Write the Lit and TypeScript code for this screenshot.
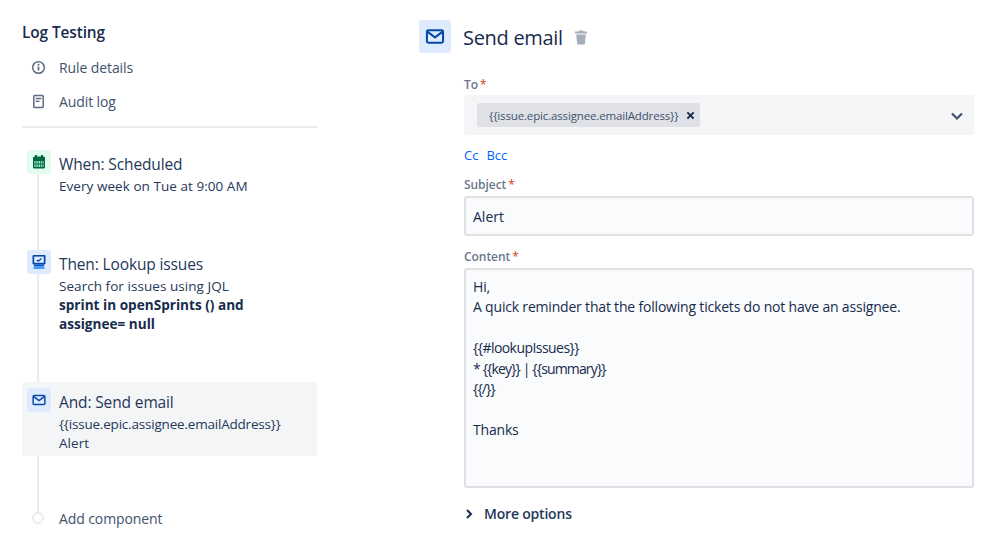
import { LitElement, html, css } from "lit";
import { customElement } from "lit/decorators.js";

const mail = html`<svg viewBox="0 0 24 24" width="100%" height="100%"><rect x="3.2" y="5.2" width="17.6" height="13.6" rx="1.6" fill="none" stroke="#0747a6" stroke-width="2.2"/><path d="M4 7l8 6 8-6" fill="none" stroke="#0747a6" stroke-width="2.2"/></svg>`;

@customElement("app-root")
export class AppRoot extends LitElement {
  static styles = css`
    :host { display: block; width: 998px; height: 542px; overflow: hidden; background: #fff; color: #253858;
      font-family: "Open Sans", "Noto Sans", sans-serif; font-size: 13.5px; letter-spacing: 0; }
    * { box-sizing: border-box; }
    .page { display: flex; height: 542px; padding-left: 22px; }
    .left { width: 295px; flex: none; padding-top: 22px; }
    .title { font-size: 15.4px; font-weight: 600; line-height: 22px; color: #172b4d; letter-spacing: -0.1px; }
    .nav { display: flex; align-items: center; height: 34px; padding-left: 9px; gap: 13px; color: #42526e; font-size: 14px; letter-spacing: -0.1px; }
    .nav svg { width: 15px; height: 15px; flex: none; }
    .navs { margin-top: 6px; }
    .divider { height: 2px; background: #ebecf0; margin-top: 8px; }
    .timeline { position: relative; margin-top: 22px; }
    .line { position: absolute; left: 15px; top: 20px; width: 2px; height: 350px; background: #ebecf0; }
    .step { position: relative; display: flex; gap: 8px; padding-left: 5px; border-radius: 3px; }
    .ico { width: 24px; height: 24px; flex: none; border-radius: 3px; padding: 4px; display: flex; }
    .green { background: #e3fcef; }
    .blue { background: #deebff; }
    .step h3 { margin: 0; font-size: 15.5px; font-weight: 400; line-height: 20px; padding-top: 4px; color: #253858; letter-spacing: -0.13px; }
    .desc { line-height: 19px; color: #253858; margin-top: 3px; letter-spacing: 0.05px; }
    .desc b { font-weight: 700; color: #172b4d; display: block; font-size: 13.6px; letter-spacing: 0; margin-top: -1px; }
    .addr { letter-spacing: -0.2px; }
    .s1 { height: 100px; }
    .s2 { height: 132px; }
    .sel { background: #f4f5f7; height: 74px; padding-top: 6px; }
    .add { position: relative; display: flex; align-items: center; margin-top: 52px; padding-left: 37px; height: 20px; color: #42526e; font-size: 14px; letter-spacing: -0.1px; }
    .dot { position: absolute; left: 10px; top: 4px; width: 12px; height: 12px; border-radius: 50%; background: #fff; border: 2px solid #ebecf0; }

    .right { margin-left: 102px; width: 555px; padding-top: 20px; }
    .head { display: flex; align-items: center; height: 33px; }
    .bigico { width: 32px; height: 33px; background: #deebff; border-radius: 3px; padding: 5px; flex: none; }
    .head h1 { margin: 2px 0 0 12px; font-size: 20px; font-weight: 500; color: #172b4d; letter-spacing: -0.3px; line-height: 33px; }
    .head svg.trash { width: 18px; height: 18px; margin-left: 9px; margin-top: 0; }
    .form { margin-left: 45px; }
    .label { font-size: 12px; font-weight: 600; color: #6b778c; line-height: 16px; letter-spacing: -0.05px; }
    .label i { font-style: normal; font-weight: 400; color: #de350b; margin-left: 2px; }
    .to { margin-top: 24px; }
    .fl { margin-top: 13px; }
    .select { display: flex; align-items: center; justify-content: space-between; height: 40px; background: #f4f5f7; border-radius: 3px; padding: 0 9px 0 13px; margin-top: 2px; }
    .tag { display: flex; align-items: center; height: 24px; width: 223px; padding-left: 12px; background: #dfe1e6; border-radius: 3px; font-size: 11.5px; color: #42526e; letter-spacing: -0.15px; }
    .tag svg { width: 9px; height: 9px; margin-left: 8px; }
    .chev { width: 16px; height: 16px; flex: none; margin-top: 1px; }
    .links { display: flex; gap: 8px; margin-top: 11px; line-height: 18px; font-size: 13px; color: #0065ff; }
    .input { height: 40px; margin-top: 3px; border: 2px solid #dfe1e6; border-radius: 3px; background: #fafbfc; display: flex; align-items: center; padding-left: 7px; color: #172b4d; font-size: 14px; }
    .ta { height: 220px; border: 2px solid #dfe1e6; border-radius: 3px; background: #fafbfc; padding: 7px 7px; margin-top: 3px; line-height: 20.45px; color: #172b4d; font-size: 14px; letter-spacing: -0.19px; white-space: pre-wrap; }
    .b1 { letter-spacing: -0.55px; }
    .b2 { letter-spacing: -0.85px; }
    .more { display: flex; align-items: center; gap: 10px; margin-top: 16px; line-height: 20px; font-size: 14px; font-weight: 600; color: #253858; letter-spacing: -0.2px; }
    .more svg { width: 10px; height: 10px; }
  `;

  render() {
    return html`<div class="page">
      <div class="left">
        <div class="title">Log Testing</div>
        <div class="navs">
          <div class="nav"><svg viewBox="0 0 16 16"><circle cx="8" cy="8" r="6.2" fill="none" stroke="#5e6c84" stroke-width="1.6"/><rect x="7.1" y="7" width="1.8" height="4.2" fill="#5e6c84"/><circle cx="8" cy="5" r="1.1" fill="#5e6c84"/></svg>Rule details</div>
          <div class="nav"><svg viewBox="0 0 16 16"><rect x="3" y="1.5" width="10" height="13" rx="1" fill="none" stroke="#5e6c84" stroke-width="1.6"/><rect x="5" y="4" width="6" height="1.6" fill="#5e6c84"/><rect x="5" y="7" width="4" height="1.6" fill="#5e6c84"/></svg>Audit log</div>
        </div>
        <div class="divider"></div>
        <div class="timeline">
          <div class="line"></div>
          <div class="step s1">
            <div class="ico green"><svg viewBox="0 0 16 16" width="16" height="16"><rect x="4" y="1" width="2" height="3" fill="#006644"/><rect x="10" y="1" width="2" height="3" fill="#006644"/><rect x="2" y="2.5" width="12" height="12" rx="1.5" fill="#006644"/><rect x="3.5" y="7" width="9" height="6" fill="#abf5d1"/><path d="M5 7v6M7.2 7v6M9.4 7v6M11.3 7v6M3.5 10h9" stroke="#006644" stroke-width="0.9"/></svg></div>
            <div>
              <h3>When: Scheduled</h3>
              <div class="desc">Every week on Tue at 9:00 AM</div>
            </div>
          </div>
          <div class="step s2">
            <div class="ico blue"><svg viewBox="0 0 16 16" width="16" height="16"><rect x="1.5" y="1" width="13" height="9.5" rx="1" fill="#0747a6"/><rect x="3.2" y="2.6" width="9.6" height="6.2" fill="#deebff"/><path d="M5.8 6l1.5 1.2L10.4 4.4" fill="none" stroke="#0747a6" stroke-width="1.3"/><rect x="3" y="10.5" width="10" height="2" fill="#0052cc"/><rect x="2.5" y="12.5" width="11" height="2.5" rx="0.8" fill="#4c9aff"/></svg></div>
            <div>
              <h3>Then: Lookup issues</h3>
              <div class="desc">Search for issues using JQL<b>sprint in openSprints () and<br />assignee= null</b></div>
            </div>
          </div>
          <div class="step sel">
            <div class="ico blue">${mail}</div>
            <div>
              <h3>And: Send email</h3>
              <div class="desc"><span class="addr">{{issue.epic.assignee.emailAddress}}</span><br />Alert</div>
            </div>
          </div>
          <div class="add"><div class="dot"></div>Add component</div>
        </div>
      </div>
      <div class="right">
        <div class="head">
          <div class="bigico">${mail}</div>
          <h1>Send email</h1>
          <svg class="trash" viewBox="0 0 18 18"><path d="M7 2.5h4l.5 1H15v2H3v-2h3.5z" fill="#a5adba"/><path d="M4.2 6.5h9.6l-.9 9a1 1 0 0 1-1 .9H6.1a1 1 0 0 1-1-.9z" fill="#a5adba"/></svg>
        </div>
        <div class="form">
          <div class="label to">To<i>*</i></div>
          <div class="select">
            <div class="tag">{{issue.epic.assignee.emailAddress}}<svg viewBox="0 0 10 10"><path d="M1.5 1.5l7 7M8.5 1.5l-7 7" stroke="#172b4d" stroke-width="2.2"/></svg></div>
            <svg class="chev" viewBox="0 0 16 16"><path d="M3 5.5l5 5 5-5" fill="none" stroke="#42526e" stroke-width="2.2"/></svg>
          </div>
          <div class="links"><span>Cc</span><span>Bcc</span></div>
          <div class="label fl">Subject<i>*</i></div>
          <div class="input">Alert</div>
          <div class="label fl">Content<i>*</i></div>
          <div class="ta">Hi,
A quick reminder that the following tickets do not have an assignee.

<span class="b1">{{#lookupIssues}}</span>
<span class="b2">* {{key}} | {{summary}}</span>
<span class="b2">{{/}}</span>

Thanks</div>
          <div class="more"><svg viewBox="0 0 10 10"><path d="M3 1l4 4-4 4" fill="none" stroke="#172b4d" stroke-width="2"/></svg>More options</div>
        </div>
      </div>
    </div>`;
  }
}
